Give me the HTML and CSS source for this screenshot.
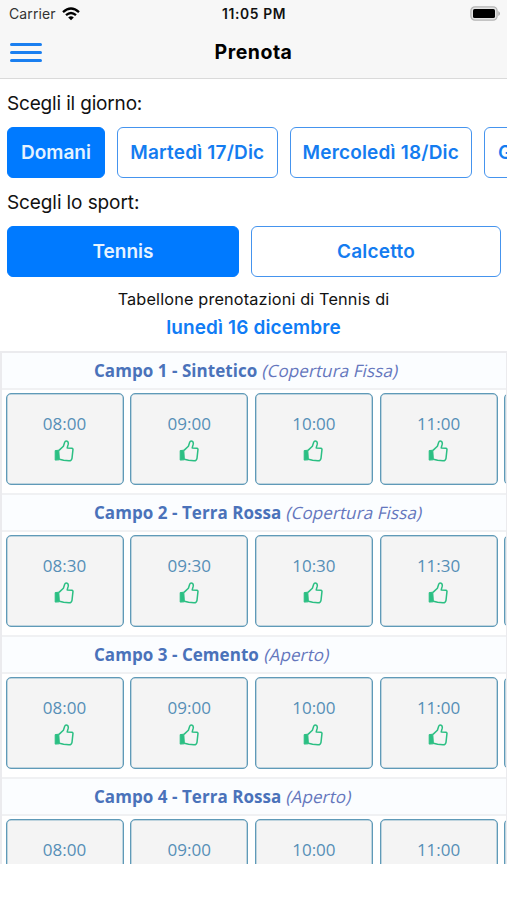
FILE: index.html
```
<!DOCTYPE html>
<html lang="it">
<head>
<meta charset="utf-8">
<title>Prenota</title>
<link rel="stylesheet" href="styles.css">
</head>
<body>
<svg class="defs" aria-hidden="true">
  <symbol id="thumb" viewBox="0 0 20 22">
    <path d="M1.2 10.6 4.8 10.2 5.4 19.8 1.2 20.1Z" fill="currentColor" stroke="currentColor" stroke-width="1"/>
    <path d="M5 10.4 9.4 6.2 10.7 2.2Q11.4.6 13.1 1.3Q14.7 2 14.2 4.2L13.2 7.9 17.8 8.2Q19.3 8.5 18.9 10.2L18 18.3Q17.5 20.9 15 20.8L9.6 20.3 5.4 19.3" fill="none" stroke="currentColor" stroke-width="1.5" stroke-linejoin="round"/>
  </symbol>
</svg>
<header class="topbar">
  <div class="status">
    <div class="carrier"><span>Carrier</span>
      <svg class="wifi" viewBox="0 0 18 14"><g fill="none" stroke="#000" stroke-width="2.3"><path d="M1 5.1Q9-2.2 17 5.1"/><path d="M4 8.2Q9 3.7 14 8.2"/></g><path d="M6.2 10.4Q9 8.2 11.8 10.4L9 13.3Z"/></svg>
    </div>
    <span class="clock">11:05 PM</span>
    <svg class="battery" viewBox="0 0 30 15"><rect x=".9" y=".9" width="26.2" height="13.2" rx="4" fill="#e4e4e4" stroke="#b4b4b4" stroke-width="1.3"/><rect x="3" y="3" width="22" height="9" rx="1.6"/><path d="M28.3 5Q30 6 30 7.5T28.3 10Z" fill="#a9a9a9"/></svg>
  </div>
  <div class="nav">
    <div class="menu"><i></i><i></i><i></i></div>
    <h1>Prenota</h1>
  </div>
</header>
<main>
  <p class="label label-day">Scegli il giorno:</p>
  <div class="days">
    <button class="btn active day-a">Domani</button>
    <button class="btn day-b">Martedì 17/Dic</button>
    <button class="btn day-c">Mercoledì 18/Dic</button>
    <button class="btn day-d">Giovedì 19/Dic</button>
  </div>
  <p class="label">Scegli lo sport:</p>
  <div class="sports">
    <button class="btn active">Tennis</button>
    <button class="btn">Calcetto</button>
  </div>
  <p class="caption">Tabellone prenotazioni di Tennis di</p>
  <p class="date">lunedì 16 dicembre</p>
  <div class="board">
    <section>
      <h2>Campo 1 - Sintetico <em>(Copertura Fissa)</em></h2>
      <div class="slots">
        <div class="slot">08:00<svg><use href="#thumb"/></svg></div>
        <div class="slot">09:00<svg><use href="#thumb"/></svg></div>
        <div class="slot">10:00<svg><use href="#thumb"/></svg></div>
        <div class="slot">11:00<svg><use href="#thumb"/></svg></div>
        <div class="slot"></div>
      </div>
    </section>
    <section>
      <h2>Campo 2 - Terra Rossa <em>(Copertura Fissa)</em></h2>
      <div class="slots">
        <div class="slot">08:30<svg><use href="#thumb"/></svg></div>
        <div class="slot">09:30<svg><use href="#thumb"/></svg></div>
        <div class="slot">10:30<svg><use href="#thumb"/></svg></div>
        <div class="slot">11:30<svg><use href="#thumb"/></svg></div>
        <div class="slot"></div>
      </div>
    </section>
    <section>
      <h2>Campo 3 - Cemento <em>(Aperto)</em></h2>
      <div class="slots">
        <div class="slot">08:00<svg><use href="#thumb"/></svg></div>
        <div class="slot">09:00<svg><use href="#thumb"/></svg></div>
        <div class="slot">10:00<svg><use href="#thumb"/></svg></div>
        <div class="slot">11:00<svg><use href="#thumb"/></svg></div>
        <div class="slot"></div>
      </div>
    </section>
    <section>
      <h2>Campo 4 - Terra Rossa <em>(Aperto)</em></h2>
      <div class="slots">
        <div class="slot">08:00<svg><use href="#thumb"/></svg></div>
        <div class="slot">09:00<svg><use href="#thumb"/></svg></div>
        <div class="slot">10:00<svg><use href="#thumb"/></svg></div>
        <div class="slot">11:00<svg><use href="#thumb"/></svg></div>
        <div class="slot"></div>
      </div>
    </section>
  </div>
</main>
</body>
</html>
```
FILE: styles.css
```
* { box-sizing: border-box; }
body { margin: 0; height: 900px; overflow: hidden; background: #fff; color: #111; font-family: Inter, "Liberation Sans", sans-serif; }
h1, h2, p { margin: 0; }
.defs { display: none; }
.topbar { height: 79px; background: #f7f7f7; border-bottom: 1px solid #dadada; }
.status { height: 27px; display: grid; grid-template-columns: 1fr auto 1fr; align-items: center; padding: 0 7px 0 9px; font-size: 14px; }
.carrier { display: flex; align-items: center; gap: 6px; color: #333; letter-spacing: .12px; }
.wifi { width: 18px; height: 14px; }
.clock { font-size: 13.8px; font-weight: 600; color: #111; letter-spacing: .65px; margin-right: 1px; }
.battery { width: 30px; height: 15px; justify-self: end; margin-bottom: 1px; }
.nav { height: 49px; display: grid; grid-template-columns: 1fr auto 1fr; align-items: center; padding: 0 10px; }
.menu { display: flex; flex-direction: column; gap: 5px; width: 32px; margin-top: 2px; }
.menu i { height: 3px; border-radius: 2px; background: #1a7ff0; }
h1 { font-size: 19.5px; font-weight: 700; line-height: 24px; color: #000; letter-spacing: .5px; }
.label { height: 48px; padding: 0 7px; line-height: 49px; font-size: 19px; letter-spacing: -.1px; }
.label-day { letter-spacing: -.17px; }
.days { display: flex; gap: 12px; padding-left: 7px; height: 51px; overflow: hidden; }
.btn { flex: none; border: 1px solid #4594ee; border-radius: 6px; padding: 0; background: #fff; color: #147cf0; font: 600 19px Inter, "Liberation Sans", sans-serif; letter-spacing: .18px; white-space: nowrap; }
.btn.active { background: #007aff; border-color: #007aff; color: #e6f3ff; letter-spacing: 0; }
.day-a { width: 98px; }
.day-b { width: 160.5px; }
.day-c { width: 182.5px; }
.day-d { width: 160px; padding: 0 0 0 13px; text-align: left; }
.sports { display: grid; grid-template-columns: 232px 250px; gap: 12px; padding-left: 7px; height: 51px; }
.caption { height: 31px; padding-top: 11px; line-height: 23px; font-size: 16.3px; letter-spacing: .14px; text-align: center; }
.date { height: 43px; line-height: 40px; font-size: 19px; font-weight: 600; letter-spacing: .12px; color: #107cf5; text-align: center; }
.board { height: 513px; overflow: hidden; border: solid #ebebee; border-width: 2px 1px 0 2px; font-family: "Open Sans", "Noto Sans", sans-serif; }
section { height: 142.1px; }
h2 { height: 37px; padding-left: 92px; line-height: 35px; background: #fbfdff; border-bottom: 2px solid #f0f1f3; font-size: 17px; font-weight: 700; letter-spacing: .04px; color: #4a72ba; white-space: nowrap; }
h2 em { display: inline-block; margin-left: 1.5px; font-style: normal; font-weight: 400; letter-spacing: .1px; transform: skewX(-13deg); color: #6476bd; }
.slots { height: 105px; display: flex; gap: 6.7px; padding: 3px 0 0 3.5px; border-bottom: 2px solid #f0f1f3; overflow: hidden; }
.slot { flex: none; width: 118px; height: 92px; padding-top: 18.5px; display: flex; flex-direction: column; align-items: center; border: 1px solid #5f9ab8; border-radius: 5px; background: #f4f4f4; box-shadow: inset 0 0 0 .5px #8ab4c8; color: #568fb7; font-size: 17px; line-height: 22px; }
.slot svg { width: 20px; height: 22px; margin: 5px 1px 0 0; color: #2bbf83; }
```
